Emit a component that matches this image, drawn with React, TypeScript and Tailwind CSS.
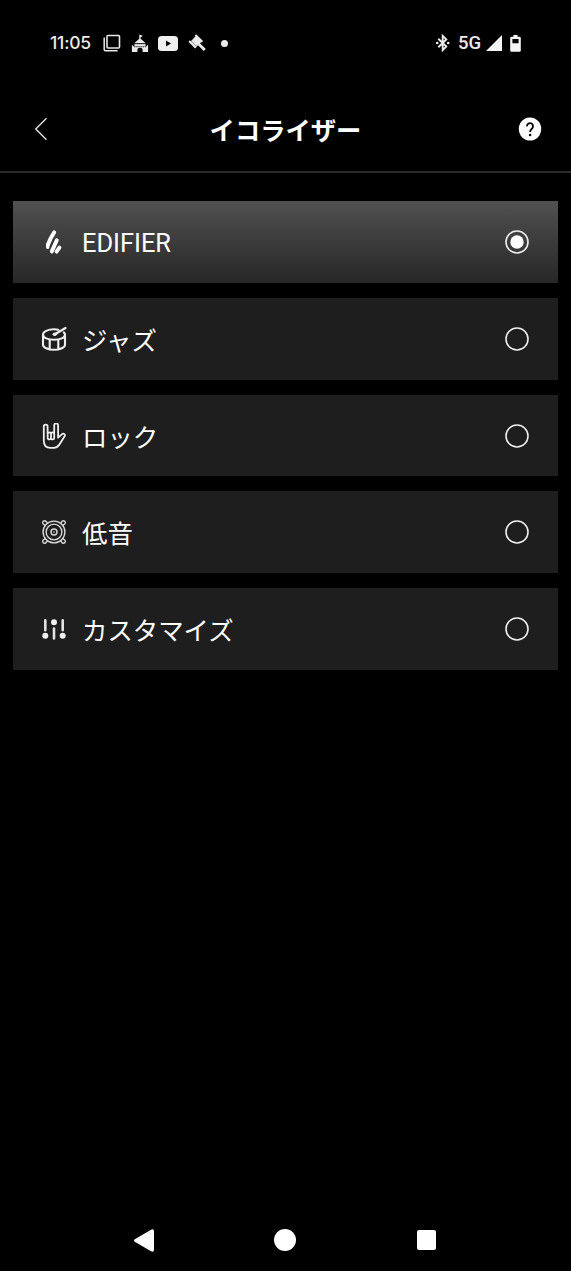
import React, { useState } from 'react';

type IconProps = { className?: string };

const WindowIcon = ({ className }: IconProps) => (
  <svg className={className} viewBox="0 0 18 18" fill="none" stroke="#e8e8e8">
    <rect x="4" y="1.5" width="12.5" height="12.5" rx="1" strokeWidth="1.6" />
    <path d="M1.2 3.5v12q0 1.2 1.2 1.2h12.2" strokeWidth="1.5" />
  </svg>
);

const CastleIcon = ({ className }: IconProps) => (
  <svg className={className} viewBox="0 0 18 18" fill="#ebebeb">
    <path d="M8.3 0l3.7 1.6-2.4 1.2v1.5l5.2 4.5H3.2l5.1-4.5z" />
    <path d="M3.4 9.6h11.2v2.2H3.4z" />
    <path d="M.9 10.2l2 1.7h12.2l2-1.7V17.6h-5.5v-2a2.6 2.4 0 0 0-5.2 0v2H.9z" />
    <path d="M3.5 9.2h11M3 12.4h12" stroke="#000" strokeWidth=".6" strokeDasharray="1.2 1" />
  </svg>
);

const YoutubeIcon = ({ className }: IconProps) => (
  <svg className={className} viewBox="0 0 20 15">
    <rect width="20" height="15" rx="3.5" fill="#f0f0f0" />
    <path d="M8 4.5v6l5-3z" fill="#000" />
  </svg>
);

const GavelIcon = ({ className }: IconProps) => (
  <svg className={className} viewBox="0 0 18 18" fill="#ebebeb">
    <path d="M2.6 7.4l5.6-5.6 5.6 5.6-5.6 5.6z" />
    <path d="M1.2 7l6.7 6.7M7.4.9l6.9 6.9" stroke="#ebebeb" strokeWidth="2.1" />
    <path d="M10.5 9.8l6.3 6.2" stroke="#ebebeb" strokeWidth="2.9" />
    <path d="M2.9 6.7l5.5 5.5" stroke="#000" strokeWidth=".4" />
  </svg>
);

const BluetoothIcon = ({ className }: IconProps) => (
  <svg className={className} viewBox="0 0 16 18">
    <path d="M3.3 4.8l8 7.8-3.6 3.5V1.9l3.6 3.5-8 7.8" fill="none" stroke="#ebebeb" strokeWidth="1.9" />
    <circle cx="2.2" cy="9" r="1.3" fill="#ebebeb" />
    <circle cx="13.2" cy="9" r="1.3" fill="#ebebeb" />
  </svg>
);

const SignalIcon = ({ className }: IconProps) => (
  <svg className={className} viewBox="0 0 16 16" fill="#f5f5f5">
    <path d="M16 0v16H0z" />
  </svg>
);

const BatteryIcon = ({ className }: IconProps) => (
  <svg className={className} viewBox="0 0 11 17">
    <path
      fillRule="evenodd"
      fill="#f5f5f5"
      d="M3.4 0h4.2v1.7h2q1.2 0 1.2 1.2v12.6q0 1.3-1.2 1.3H1.4Q.2 16.8.2 15.5V2.9q0-1.2 1.2-1.2h2zM2.4 4v4.3h6.2V4z"
    />
  </svg>
);

const BackIcon = ({ className }: IconProps) => (
  <svg className={className} viewBox="0 0 14 24" fill="none" stroke="#e2e2e2" strokeWidth="1.4">
    <path d="M12.5 1.2L1.8 12l10.7 10.8" />
  </svg>
);

const HelpIcon = ({ className }: IconProps) => (
  <svg className={className} viewBox="0 0 24 24">
    <ellipse cx="12" cy="12" rx="11.2" ry="11.6" fill="#fff" />
    <path d="M9 9.4a3 3.1 0 1 1 5.2 1.9c-1.2 1.2-2.1 1.7-2.1 3.7" fill="none" stroke="#000" strokeWidth="1.8" />
    <circle cx="12.1" cy="18" r="1.3" fill="#000" />
  </svg>
);

const EdifierIcon = ({ className }: IconProps) => (
  <svg className={className} viewBox="0 0 26 26" fill="none" stroke="#fff" strokeWidth="3.9" strokeLinecap="round">
    <path d="M13.2 3.3Q9.2 9 6.8 16.2M15.8 11.3L10.8 22.4M18.4 18.6L15.6 22.6" />
    <path d="M6.7 15.5v3" strokeWidth="3.2" />
  </svg>
);

const DrumIcon = ({ className }: IconProps) => (
  <svg className={className} viewBox="0 0 26 26" fill="none" stroke="#efefef" strokeWidth="2.1" strokeLinecap="round">
    <path d="M17.2 3.8Q15.2 3.3 13 3.3C6.8 3.3 2 5.6 2 8.7s4.8 5.1 11 5.1 11-2 11-5.1q0-1.3-1.2-2.3" />
    <path d="M2 8.7v10c0 2.8 4.8 5.1 11 5.1s11-2.3 11-5.1v-10M8.7 13.8v9M17.3 13.8v9" />
    <path d="M24.5 2L13.8 8.3" strokeWidth="2.2" />
    <ellipse cx="13.8" cy="8.3" rx="1.9" ry="1.2" fill="#efefef" strokeWidth="1" />
  </svg>
);

const RockHandIcon = ({ className }: IconProps) => (
  <svg className={className} viewBox="0 0 26 26" fill="none" stroke="#efefef" strokeWidth="1.8" strokeLinejoin="round" strokeLinecap="round">
    <path d="M6.6 10V3.6a1.9 1.9 0 0 0-3.8 0v14.1c0 4.6 2.6 7.1 6.7 7.1h3.2c2.5 0 4-1 5.4-2.9l5.5-8.7c1-1.7-.8-3.3-2.5-2.1l-4 3.6V2.4a1.9 1.9 0 0 0-3.9 0V10" />
    <path d="M6.7 10.8q0-1.5 1.7-1.5 1.6 0 1.6 1.5v4.1q0 1.5-1.6 1.5-1.7 0-1.7-1.5zM10 10.8q0-1.5 1.7-1.5 1.5 0 1.5 1.5v4.1q0 1.5-1.5 1.5-1.7 0-1.7-1.5z" />
  </svg>
);

const SpeakerIcon = ({ className }: IconProps) => (
  <svg className={className} viewBox="0 0 26 26" fill="none" stroke="#d8d8d8" strokeWidth="1.4">
    <circle cx="13" cy="13" r="10.9" />
    <circle cx="13" cy="13" r="7.9" />
    <circle cx="13" cy="13" r="3" />
    <circle cx="13" cy="13" r="0.8" fill="#d8d8d8" stroke="none" />
    <path d="M6.4 4.3L4.7 2.1a1.9 1.9 0 0 0-2.7 2.6l2.4 1.8M19.6 4.3l1.7-2.2A1.9 1.9 0 0 1 24 4.7l-2.4 1.8M6.4 21.7l-1.7 2.2A1.9 1.9 0 0 1 2 21.3l2.4-1.8M19.6 21.7l1.7 2.2a1.9 1.9 0 0 0 2.7-2.6l-2.4-1.8" />
  </svg>
);

const SlidersIcon = ({ className }: IconProps) => (
  <svg className={className} viewBox="0 0 26 26" fill="#f2f2f2" stroke="#e2e2e2" strokeWidth="2.6" strokeLinecap="round">
    <path d="M4.3 4.2v10M13 12.5v10M21.7 4.2v10" />
    <g stroke="none">
      <circle cx="4.3" cy="19.8" r="3" />
      <circle cx="13" cy="6.2" r="3" />
      <circle cx="21.7" cy="19.8" r="3" />
    </g>
  </svg>
);

const Radio = ({ checked }: { checked: boolean }) => (
  <svg className="ml-auto h-6 w-6" viewBox="0 0 24 24">
    <circle cx="12" cy="12" r="11" fill="none" stroke="#ededed" strokeWidth="1.6" />
    {checked && <circle cx="12" cy="12" r="6.7" fill="#fff" />}
  </svg>
);

const presets = [
  { id: 'edifier', label: 'EDIFIER', Icon: EdifierIcon },
  { id: 'jazz', label: 'ジャズ', Icon: DrumIcon },
  { id: 'rock', label: 'ロック', Icon: RockHandIcon },
  { id: 'bass', label: '低音', Icon: SpeakerIcon },
  { id: 'custom', label: 'カスタマイズ', Icon: SlidersIcon },
];

const StatusBar = () => (
  <div className="flex h-[86px] shrink-0 items-center justify-between pl-[50px] pr-[49px] text-[#ebebeb]">
    <div className="flex items-center">
      <span className="w-[53px] pt-px font-['Inter'] text-[17.5px] font-medium tracking-[-0.2px]">11:05</span>
      <WindowIcon className="h-[18px] w-[18px]" />
      <CastleIcon className="ml-[10px] h-[19px] w-[18px]" />
      <YoutubeIcon className="ml-[9px] h-[15px] w-5" />
      <GavelIcon className="ml-[10px] h-[18px] w-[18px]" />
      <span className="ml-[15px] h-[7px] w-[7px] rounded-full bg-[#ebebeb]" />
    </div>
    <div className="flex items-center">
      <BluetoothIcon className="h-[18px] w-4" />
      <span className="ml-[7px] w-[28px] font-['Roboto'] text-[18.5px] leading-[18px] font-medium">5G</span>
      <SignalIcon className="h-4 w-4" />
      <BatteryIcon className="ml-[8px] mr-px h-[17px] w-[11px]" />
    </div>
  </div>
);

const Header = () => (
  <header className="flex h-[87px] shrink-0 items-center justify-between border-b-2 border-[#2d2b2c] pl-[34px] pr-[29px]">
    <button className="w-[19px]" aria-label="戻る">
      <BackIcon className="h-6 w-[14px]" />
    </button>
    <h1 className="pt-[7px] text-[25.3px] leading-none font-bold">イコライザー</h1>
    <button aria-label="ヘルプ">
      <HelpIcon className="h-6 w-6" />
    </button>
  </header>
);

const NavigationBar = () => (
  <nav className="mt-auto flex h-[62px] shrink-0 items-center justify-between pl-[134px] pr-[135px]">
    <svg className="h-[23px] w-5" viewBox="0 0 20 23" fill="#fff">
      <path d="M.8 10.3L17 .7q3-1.5 3 1.7v18.2q0 3.2-3 1.7L.8 12.7q-1.6-1.2 0-2.4z" />
    </svg>
    <span className="mr-px h-[22px] w-[22px] rounded-full bg-white" />
    <span className="h-5 w-[19px] rounded-[2px] bg-white" />
  </nav>
);

const App: React.FC = () => {
  const [selected, setSelected] = useState('edifier');

  return (
    <div className="flex h-[1271px] w-full flex-col overflow-hidden bg-black font-['Roboto','Noto_Sans_CJK_JP',sans-serif] text-white">
      <StatusBar />
      <Header />
      <main className="flex flex-col gap-[15px] pt-[28.1px] pr-[13px] pl-[12.5px]">
        {presets.map(({ id, label, Icon }) => (
          <button
            key={id}
            onClick={() => setSelected(id)}
            className={`flex h-[81.8px] items-center pr-[29px] pl-[28.5px] ${
              selected === id ? 'bg-linear-to-b from-[#515151] to-[#272727]' : 'bg-[#1e1e1e]'
            }`}
          >
            <Icon className="h-[26px] w-[26px]" />
            <span className={`ml-[15px] text-[25.4px] leading-none ${id === 'edifier' ? 'pt-[3px]' : 'pt-[5.5px]'}`}>
              {label}
            </span>
            <Radio checked={selected === id} />
          </button>
        ))}
      </main>
      <NavigationBar />
    </div>
  );
};

export default App;
